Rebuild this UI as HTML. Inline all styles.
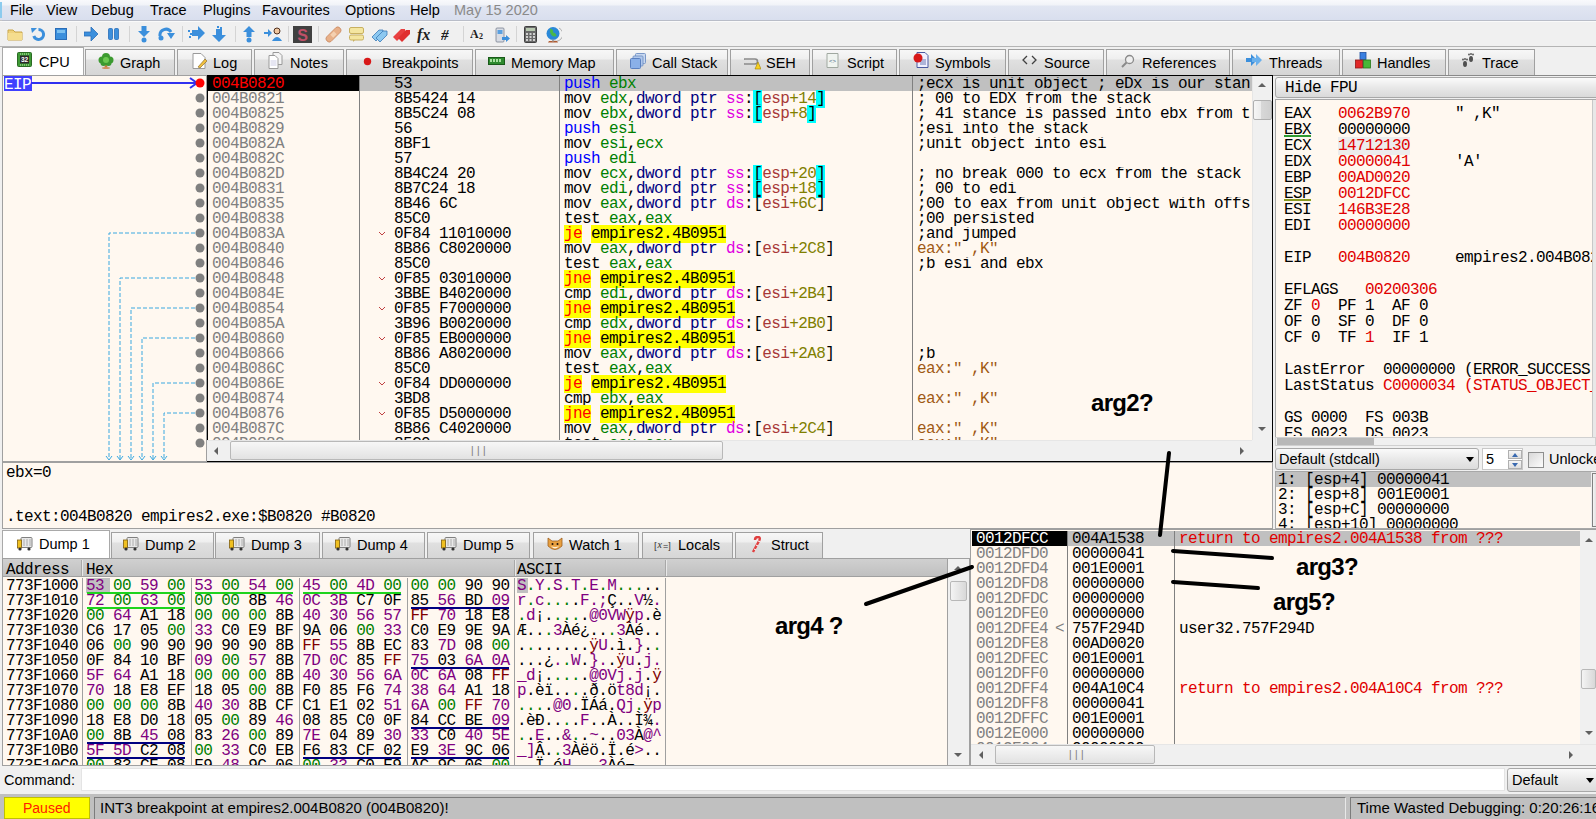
<!DOCTYPE html><html><head><meta charset="utf-8"><style>
html,body{margin:0;padding:0;}
body{width:1596px;height:819px;overflow:hidden;position:relative;background:#f0f0f0;font-family:'Liberation Sans',sans-serif;}
.m{position:absolute;font-family:'Liberation Mono',monospace;font-size:16px;letter-spacing:-0.6px;line-height:15px;white-space:pre;margin-top:1px;margin-left:-1px;}
.s{position:absolute;white-space:pre;font-family:'Liberation Sans',sans-serif;font-size:14px;line-height:16px;color:#000;}
</style></head><body><div style="position:absolute;left:0px;top:0px;width:1596px;height:21px;background:linear-gradient(#f8f9fc 0px,#f1f3f8 5px,#e1e6f2 6px,#d9dfee 20px);border-bottom:1px solid #b9bdc8;box-sizing:border-box;"></div><div class="s" style="left:10px;top:2px;font-size:14.5px;">File</div><div class="s" style="left:46px;top:2px;font-size:14.5px;">View</div><div class="s" style="left:91px;top:2px;font-size:14.5px;">Debug</div><div class="s" style="left:150px;top:2px;font-size:14.5px;">Trace</div><div class="s" style="left:203px;top:2px;font-size:14.5px;">Plugins</div><div class="s" style="left:262px;top:2px;font-size:14.5px;">Favourites</div><div class="s" style="left:345px;top:2px;font-size:14.5px;">Options</div><div class="s" style="left:410px;top:2px;font-size:14.5px;">Help</div><div class="s" style="left:454px;top:2px;font-size:14.5px;color:#8a8a8a;">May 15 2020</div><div style="position:absolute;left:0px;top:2px;width:2px;height:16px;background:#8ccbee;"></div><div style="position:absolute;left:0px;top:20px;width:2px;height:6px;background:#c4c4c4;"></div><div style="position:absolute;left:0px;top:21px;width:1596px;height:26px;background:#f0f0f0;border-top:1px solid #fafafa;border-bottom:1px solid #b4b4b4;box-sizing:border-box;"></div><div style="position:absolute;left:2px;top:47px;width:82px;height:29px;background:#fff;border:1px solid #a9a9a9;border-bottom:none;box-sizing:border-box;"></div><div class="s" style="left:39px;top:54px;font-size:14.5px;">CPU</div><div style="position:absolute;left:85px;top:49px;width:90px;height:26px;background:linear-gradient(#f7f7f7 0px,#efefef 9px,#e0e0e0 10px,#d5d5d5 26px);border:1px solid #a0a0a0;border-bottom:none;box-sizing:border-box;"></div><div class="s" style="left:120px;top:55px;font-size:14.5px;">Graph</div><div style="position:absolute;left:177px;top:49px;width:75px;height:26px;background:linear-gradient(#f7f7f7 0px,#efefef 9px,#e0e0e0 10px,#d5d5d5 26px);border:1px solid #a0a0a0;border-bottom:none;box-sizing:border-box;"></div><div class="s" style="left:213px;top:55px;font-size:14.5px;">Log</div><div style="position:absolute;left:254px;top:49px;width:90px;height:26px;background:linear-gradient(#f7f7f7 0px,#efefef 9px,#e0e0e0 10px,#d5d5d5 26px);border:1px solid #a0a0a0;border-bottom:none;box-sizing:border-box;"></div><div class="s" style="left:290px;top:55px;font-size:14.5px;">Notes</div><div style="position:absolute;left:346px;top:49px;width:127px;height:26px;background:linear-gradient(#f7f7f7 0px,#efefef 9px,#e0e0e0 10px,#d5d5d5 26px);border:1px solid #a0a0a0;border-bottom:none;box-sizing:border-box;"></div><div class="s" style="left:382px;top:55px;font-size:14.5px;">Breakpoints</div><div style="position:absolute;left:475px;top:49px;width:139px;height:26px;background:linear-gradient(#f7f7f7 0px,#efefef 9px,#e0e0e0 10px,#d5d5d5 26px);border:1px solid #a0a0a0;border-bottom:none;box-sizing:border-box;"></div><div class="s" style="left:511px;top:55px;font-size:14.5px;">Memory Map</div><div style="position:absolute;left:616px;top:49px;width:112px;height:26px;background:linear-gradient(#f7f7f7 0px,#efefef 9px,#e0e0e0 10px,#d5d5d5 26px);border:1px solid #a0a0a0;border-bottom:none;box-sizing:border-box;"></div><div class="s" style="left:652px;top:55px;font-size:14.5px;">Call Stack</div><div style="position:absolute;left:730px;top:49px;width:80px;height:26px;background:linear-gradient(#f7f7f7 0px,#efefef 9px,#e0e0e0 10px,#d5d5d5 26px);border:1px solid #a0a0a0;border-bottom:none;box-sizing:border-box;"></div><div class="s" style="left:766px;top:55px;font-size:14.5px;">SEH</div><div style="position:absolute;left:812px;top:49px;width:85px;height:26px;background:linear-gradient(#f7f7f7 0px,#efefef 9px,#e0e0e0 10px,#d5d5d5 26px);border:1px solid #a0a0a0;border-bottom:none;box-sizing:border-box;"></div><div class="s" style="left:847px;top:55px;font-size:14.5px;">Script</div><div style="position:absolute;left:899px;top:49px;width:107px;height:26px;background:linear-gradient(#f7f7f7 0px,#efefef 9px,#e0e0e0 10px,#d5d5d5 26px);border:1px solid #a0a0a0;border-bottom:none;box-sizing:border-box;"></div><div class="s" style="left:935px;top:55px;font-size:14.5px;">Symbols</div><div style="position:absolute;left:1008px;top:49px;width:96px;height:26px;background:linear-gradient(#f7f7f7 0px,#efefef 9px,#e0e0e0 10px,#d5d5d5 26px);border:1px solid #a0a0a0;border-bottom:none;box-sizing:border-box;"></div><div class="s" style="left:1044px;top:55px;font-size:14.5px;">Source</div><div style="position:absolute;left:1106px;top:49px;width:124px;height:26px;background:linear-gradient(#f7f7f7 0px,#efefef 9px,#e0e0e0 10px,#d5d5d5 26px);border:1px solid #a0a0a0;border-bottom:none;box-sizing:border-box;"></div><div class="s" style="left:1142px;top:55px;font-size:14.5px;">References</div><div style="position:absolute;left:1232px;top:49px;width:108px;height:26px;background:linear-gradient(#f7f7f7 0px,#efefef 9px,#e0e0e0 10px,#d5d5d5 26px);border:1px solid #a0a0a0;border-bottom:none;box-sizing:border-box;"></div><div class="s" style="left:1269px;top:55px;font-size:14.5px;">Threads</div><div style="position:absolute;left:1342px;top:49px;width:104px;height:26px;background:linear-gradient(#f7f7f7 0px,#efefef 9px,#e0e0e0 10px,#d5d5d5 26px);border:1px solid #a0a0a0;border-bottom:none;box-sizing:border-box;"></div><div class="s" style="left:1377px;top:55px;font-size:14.5px;">Handles</div><div style="position:absolute;left:1448px;top:49px;width:87px;height:26px;background:linear-gradient(#f7f7f7 0px,#efefef 9px,#e0e0e0 10px,#d5d5d5 26px);border:1px solid #a0a0a0;border-bottom:none;box-sizing:border-box;"></div><div class="s" style="left:1482px;top:55px;font-size:14.5px;">Trace</div><svg style="position:absolute;left:7px;top:27px" width="16" height="14" viewBox="0 0 16 14"><path d="M1 3 h5 l2 2 h7 v8 h-14 z" fill="#efd27c" stroke="#c9a548" stroke-width="1"/><path d="M1 6 h14 v7 h-14z" fill="#f5dd8e"/></svg><svg style="position:absolute;left:31px;top:27px" width="15" height="15" viewBox="0 0 15 15"><path d="M7.5 2.5 A5 5 0 1 1 2.8 9" stroke="#3b8fdc" stroke-width="3" fill="none"/><path d="M0 1 L6 1 L1 6 Z" fill="#3b8fdc"/></svg><svg style="position:absolute;left:55px;top:28px" width="12" height="12" viewBox="0 0 12 12"><rect x="0.5" y="0.5" width="11" height="11" fill="#3b8fdc" stroke="#2a6db8"/><rect x="2" y="2" width="8" height="3" fill="#7cc0f0"/></svg><div style="position:absolute;left:76px;top:26px;width:1px;height:16px;background:#d4d4d4;"></div><svg style="position:absolute;left:84px;top:27px" width="15" height="14" viewBox="0 0 15 14"><path d="M0 5 h7 v-5 l7 7 l-7 7 v-5 h-7z" fill="#3b8fdc" stroke="#2a6db8" stroke-width="0.8"/></svg><svg style="position:absolute;left:108px;top:28px" width="11" height="12" viewBox="0 0 11 12"><rect x="0.5" y="0.5" width="4" height="11" rx="1" fill="#3b8fdc" stroke="#2a6db8" stroke-width="0.8"/><rect x="6.5" y="0.5" width="4" height="11" rx="1" fill="#3b8fdc" stroke="#2a6db8" stroke-width="0.8"/></svg><div style="position:absolute;left:129px;top:26px;width:1px;height:16px;background:#d4d4d4;"></div><svg style="position:absolute;left:138px;top:26px" width="12" height="17" viewBox="0 0 12 17"><path d="M3.5 0 h5 v5 h3.5 l-6 6 l-6 -6 h3.5z" fill="#3b8fdc"/><circle cx="6" cy="14" r="2.5" fill="#3b8fdc"/></svg><svg style="position:absolute;left:158px;top:27px" width="18" height="14" viewBox="0 0 18 14"><path d="M2 9 A6 6 0 0 1 13 5" stroke="#3b8fdc" stroke-width="3" fill="none"/><path d="M9 6 h8 l-4 6z" fill="#3b8fdc"/><circle cx="3" cy="11" r="2.5" fill="#3b8fdc"/></svg><div style="position:absolute;left:182px;top:26px;width:1px;height:16px;background:#d4d4d4;"></div><svg style="position:absolute;left:188px;top:26px" width="17" height="15" viewBox="0 0 17 15"><path d="M4 4 h6 v-4 l7 7 l-7 7 v-4 h-6z" fill="#3b8fdc"/><rect x="0" y="4" width="2" height="2" fill="#3b8fdc"/><rect x="2" y="7" width="2" height="2" fill="#3b8fdc"/><rect x="1" y="10" width="2" height="2" fill="#3b8fdc"/></svg><svg style="position:absolute;left:212px;top:26px" width="15" height="17" viewBox="0 0 15 17"><path d="M4 3 h6 v6 h4 l-7 7 l-7 -7 h4z" fill="#3b8fdc"/><rect x="5" y="0" width="2" height="2" fill="#3b8fdc"/><rect x="8" y="1" width="2" height="2" fill="#3b8fdc"/></svg><div style="position:absolute;left:235px;top:26px;width:1px;height:16px;background:#d4d4d4;"></div><svg style="position:absolute;left:243px;top:26px" width="12" height="17" viewBox="0 0 12 17"><path d="M6 0 l6 6 h-3.5 v5 h-5 v-5 h-3.5z" fill="#3b8fdc"/><circle cx="6" cy="14" r="2.5" fill="#3b8fdc"/></svg><svg style="position:absolute;left:264px;top:27px" width="18" height="14" viewBox="0 0 18 14"><path d="M0 5 h4 v-3 l4 4 l-4 4 v-3 h-4z" fill="#3b8fdc"/><circle cx="13" cy="4" r="3" fill="#f0c8a0" stroke="#503020" stroke-width="1"/><path d="M8 14 q5 -8 10 0z" fill="#3b8fdc"/></svg><div style="position:absolute;left:288px;top:26px;width:1px;height:16px;background:#d4d4d4;"></div><svg style="position:absolute;left:293px;top:26px" width="19" height="17" viewBox="0 0 19 17"><rect x="0" y="0" width="19" height="17" fill="#404040"/><text x="9.5" y="14.5" font-family="Liberation Sans" font-weight="bold" font-size="16" fill="#c05068" text-anchor="middle">S</text></svg><div style="position:absolute;left:318px;top:26px;width:1px;height:16px;background:#d4d4d4;"></div><svg style="position:absolute;left:325px;top:26px" width="17" height="17" viewBox="0 0 17 17"><path d="M1.5 11 L11 1.5 Q13 0 15 2 Q17 4 15.5 6 L6 15.5 Q4 17 2 15 Q0 13 1.5 11z" fill="#e8b088" stroke="#c88860" stroke-width="0.8"/><rect x="6.5" y="6" width="4" height="5" fill="#f4d0b0" transform="rotate(45 8.5 8.5)"/></svg><svg style="position:absolute;left:349px;top:27px" width="15" height="15" viewBox="0 0 15 15"><rect x="0.5" y="0.5" width="14" height="6" rx="1.5" fill="#f4e6a0" stroke="#c8b060"/><rect x="0.5" y="8" width="14" height="5" rx="1.5" fill="#f4e6a0" stroke="#c8b060"/><path d="M4 13 v2 l2 -2z" fill="#c8b060"/></svg><svg style="position:absolute;left:371px;top:27px" width="17" height="15" viewBox="0 0 17 15"><path d="M1 10 L8 3 L12 3 L12 7 L5 14z" fill="#8cc8f0" stroke="#3a7ab8" stroke-width="0.8"/><path d="M5 11 L12 4 L16 4 L16 8 L9 15z" fill="#8cc8f0" stroke="#3a7ab8" stroke-width="0.8"/></svg><svg style="position:absolute;left:393px;top:27px" width="18" height="15" viewBox="0 0 18 15"><path d="M0 10 L8 2 L12 2 L12 6 L4 14z" fill="#e84040"/><path d="M5 11 L13 3 L17 3 L17 7 L9 15z" fill="#e03030"/></svg><svg style="position:absolute;left:416px;top:26px" width="18" height="17" viewBox="0 0 18 17"><text x="1" y="14" font-family="Liberation Serif" font-style="italic" font-weight="bold" font-size="16" fill="#202020">fx</text></svg><svg style="position:absolute;left:441px;top:26px" width="13" height="17" viewBox="0 0 13 17"><text x="0" y="14" font-family="Liberation Serif" font-style="italic" font-weight="bold" font-size="15" fill="#202020">#</text></svg><div style="position:absolute;left:463px;top:26px;width:1px;height:16px;background:#d4d4d4;"></div><svg style="position:absolute;left:470px;top:27px" width="16" height="14" viewBox="0 0 16 14"><text x="0" y="11" font-family="Liberation Serif" font-weight="bold" font-size="12" fill="#202020">A</text><text x="9" y="12" font-family="Liberation Serif" font-weight="bold" font-size="8" fill="#202020">2</text></svg><svg style="position:absolute;left:495px;top:26px" width="15" height="17" viewBox="0 0 15 17"><rect x="1" y="2" width="8" height="14" rx="1" fill="#d8dce4" stroke="#7a8090" stroke-width="0.8"/><rect x="2.5" y="4" width="5" height="4" fill="#5aa0e0"/><path d="M7 11 h4 v-2 l4 3.5 l-4 3.5 v-2 h-4z" fill="#3b8fdc"/></svg><div style="position:absolute;left:516px;top:26px;width:1px;height:16px;background:#d4d4d4;"></div><svg style="position:absolute;left:524px;top:26px" width="13" height="17" viewBox="0 0 13 17"><rect x="0.5" y="0.5" width="12" height="16" rx="1" fill="#6a6a6a" stroke="#404040"/><rect x="2" y="2" width="9" height="3" fill="#b8c8b0"/><g fill="#d0d0d0"><rect x="2" y="7" width="2" height="2"/><rect x="5.5" y="7" width="2" height="2"/><rect x="9" y="7" width="2" height="2"/><rect x="2" y="10" width="2" height="2"/><rect x="5.5" y="10" width="2" height="2"/><rect x="9" y="10" width="2" height="2"/><rect x="2" y="13" width="2" height="2"/><rect x="5.5" y="13" width="2" height="2"/><rect x="9" y="13" width="2" height="2"/></g></svg><svg style="position:absolute;left:545px;top:26px" width="17" height="17" viewBox="0 0 17 17"><path d="M14 2 A7 7 0 0 1 9 15" stroke="#b0b0b0" stroke-width="1" fill="none"/><circle cx="8" cy="7.5" r="6.5" fill="#2a88d8"/><path d="M5 2.5 q4 1 3 4 q3 0 3.5 3.5 q-3 1.5 -5 -1 q-2 -2 -1.5 -6.5z" fill="#4ab848"/><path d="M4 15 h8 l1 1.5 h-10z" fill="#b05a30"/><rect x="7" y="13.5" width="2" height="2" fill="#a0a0a0"/></svg><svg style="position:absolute;left:17px;top:52px" width="15" height="15" viewBox="0 0 15 15"><rect x="0.5" y="0.5" width="14" height="14" rx="1" fill="#3e9a36" stroke="#2a6a24"/><g fill="#c8f0b8"><rect x="3" y="1.5" width="1" height="1"/><rect x="5" y="1.5" width="1" height="1"/><rect x="7" y="1.5" width="1" height="1"/><rect x="9" y="1.5" width="1" height="1"/><rect x="11" y="1.5" width="1" height="1"/><rect x="3" y="12.5" width="1" height="1"/><rect x="5" y="12.5" width="1" height="1"/><rect x="7" y="12.5" width="1" height="1"/><rect x="9" y="12.5" width="1" height="1"/><rect x="11" y="12.5" width="1" height="1"/></g><rect x="3" y="3.5" width="9" height="8" fill="#2a2a2a"/><text x="7.5" y="10" font-family="Liberation Sans" font-weight="bold" font-size="6.5" fill="#ffffff" text-anchor="middle">32</text></svg><svg style="position:absolute;left:98px;top:53px" width="16" height="16" viewBox="0 0 16 16"><path d="M7 10 L6.5 15 L9.5 15 L9 10z" fill="#c08040"/><ellipse cx="8" cy="15" rx="4" ry="1" fill="#d09060"/><g fill="#3c9a30"><circle cx="4" cy="7" r="3.5"/><circle cx="12" cy="7" r="3.5"/><circle cx="8" cy="4" r="4"/><circle cx="5.5" cy="10" r="3"/><circle cx="10.5" cy="10" r="3"/></g><circle cx="8" cy="7" r="3" fill="#6cc850"/></svg><svg style="position:absolute;left:192px;top:53px" width="15" height="16" viewBox="0 0 15 16"><path d="M1 0.5 h8 l4 4 v11 h-12z" fill="#fff" stroke="#9a9a9a"/><path d="M6 14 L13 6 L15 8 L8 15z" fill="#f0c040" stroke="#806020" stroke-width="0.6"/></svg><svg style="position:absolute;left:268px;top:52px" width="15" height="17" viewBox="0 0 15 17"><path d="M5 0.5 h6 l3 3 v9 h-9z" fill="#f4f4f4" stroke="#9a9a9a"/><path d="M1 3.5 h6 l3 3 v10 h-9z" fill="#fff" stroke="#9a9a9a"/><g stroke="#c0c0e0" stroke-width="0.8"><line x1="2.5" y1="9" x2="8.5" y2="9"/><line x1="2.5" y1="11" x2="8.5" y2="11"/><line x1="2.5" y1="13" x2="8.5" y2="13"/></g></svg><svg style="position:absolute;left:363px;top:57px" width="9" height="9" viewBox="0 0 9 9"><circle cx="4.5" cy="4.5" r="3.7" fill="#d81818"/></svg><svg style="position:absolute;left:488px;top:57px" width="17" height="8" viewBox="0 0 17 8"><rect x="0.5" y="0.5" width="16" height="7" fill="#2e8a2e" stroke="#1a5a1a"/><g fill="#a8e0a0"><rect x="2" y="2" width="2" height="3"/><rect x="5" y="2" width="2" height="3"/><rect x="8" y="2" width="2" height="3"/><rect x="11" y="2" width="2" height="3"/></g></svg><svg style="position:absolute;left:630px;top:53px" width="16" height="16" viewBox="0 0 16 16"><rect x="5.5" y="0.5" width="10" height="10" rx="1" fill="#c8d8f0" stroke="#7a98c8"/><rect x="3" y="3" width="10" height="10" rx="1" fill="#b0c8ec" stroke="#7a98c8"/><rect x="0.5" y="5.5" width="10" height="10" rx="1" fill="#8ab0e8" stroke="#5a80c0"/></svg><svg style="position:absolute;left:744px;top:56px" width="17" height="14" viewBox="0 0 17 14"><path d="M1 3 h10 a2.5 2.5 0 0 1 0 5 h-10 a2.5 2.5 0 0 1 0 -5z" fill="none" stroke="#8a8a8a" stroke-width="1.6"/><path d="M11 13 L14 6 L17 13z" fill="#f8d020" stroke="#a08000" stroke-width="0.6"/></svg><svg style="position:absolute;left:825px;top:53px" width="15" height="16" viewBox="0 0 15 16"><path d="M2 0.5 h11 v14 h-11z" fill="#f0f4f0" stroke="#a0a8a0"/><text x="7.5" y="10" font-family="Liberation Sans" font-size="6" fill="#406080" text-anchor="middle">&lt;&gt;</text></svg><svg style="position:absolute;left:913px;top:52px" width="17" height="16" viewBox="0 0 17 16"><path d="M4 0.5 h8 l3 3 v12 h-11z" fill="#f0f0ff" stroke="#4a5aa0"/><g stroke="#4a5aa0" stroke-width="0.8"><line x1="7" y1="8" x2="13" y2="8"/><line x1="7" y1="10" x2="13" y2="10"/><line x1="7" y1="12" x2="13" y2="12"/></g><circle cx="5" cy="6" r="4.5" fill="#d81818"/></svg><svg style="position:absolute;left:1022px;top:55px" width="15" height="10" viewBox="0 0 15 10"><path d="M5 1 L1 5 L5 9 M10 1 L14 5 L10 9" stroke="#404040" stroke-width="1.3" fill="none"/></svg><svg style="position:absolute;left:1121px;top:54px" width="14" height="14" viewBox="0 0 14 14"><circle cx="8.5" cy="5.5" r="4" fill="#f0f0f0" stroke="#8a8a8a" stroke-width="1.3"/><line x1="5.5" y1="8.5" x2="1" y2="13" stroke="#8a8a8a" stroke-width="2"/></svg><svg style="position:absolute;left:1246px;top:54px" width="17" height="13" viewBox="0 0 17 13"><path d="M0 4 h5 v-4 l6 6 l-6 6 v-4 h-5z" fill="#3b8fdc"/><path d="M6 4 h4 v-4 l6 6 l-6 6 v-4 h-4z" fill="#6ab0ec"/></svg><svg style="position:absolute;left:1355px;top:52px" width="16" height="17" viewBox="0 0 16 17"><rect x="5" y="0.5" width="6" height="7" fill="#3a80e0" stroke="#2050a0" stroke-width="0.8"/><rect x="0.5" y="8" width="7" height="8" fill="#e02828" stroke="#901818" stroke-width="0.8"/><rect x="8.5" y="8" width="7" height="8" fill="#48b838" stroke="#287818" stroke-width="0.8"/></svg><svg style="position:absolute;left:1461px;top:53px" width="14" height="16" viewBox="0 0 14 16"><g fill="#505050"><ellipse cx="4" cy="11" rx="2" ry="3"/><circle cx="2" cy="6.5" r="0.9"/><circle cx="4" cy="6" r="0.9"/><circle cx="6" cy="6.5" r="0.9"/><ellipse cx="10" cy="6" rx="2" ry="3"/><circle cx="8" cy="1.5" r="0.9"/><circle cx="10" cy="1" r="0.9"/><circle cx="12" cy="1.5" r="0.9"/></g></svg><div style="position:absolute;left:2px;top:75px;width:205px;height:387px;background:#FFF8F0;border:1px solid #a0a0a0;box-sizing:border-box;"></div><div style="position:absolute;left:207px;top:75px;width:1066px;height:387px;background:#FFF8F0;border:1px solid #000;box-sizing:border-box;"></div><div style="position:absolute;left:208px;top:76px;width:1044px;height:364px;overflow:hidden;"><div style="position:absolute;left:0px;top:0px;width:151px;height:15px;background:#000;"></div><div style="position:absolute;left:151px;top:0px;width:893px;height:15px;background:#C0C0C0;"></div><div class="m" style="left:5px;top:0px;color:#FF0000;">004B0820</div><div class="m" style="left:187px;top:0px;color:#000;">53</div><div class="m" style="left:357px;top:0px;color:#000;"><span style="color:#0000FF;">push</span> <span style="color:#008000;">ebx</span></div><div class="m" style="left:710px;top:0px;width:333px;overflow:hidden;color:#000000;">;ecx is unit object ; eDx is our stance</div><div class="m" style="left:5px;top:15px;color:#808080;">004B0821</div><div class="m" style="left:187px;top:15px;color:#000;">8B5424 14</div><div class="m" style="left:357px;top:15px;color:#000;"><span style="color:#000000;">mov</span> <span style="color:#008000;">edx</span><span style="color:#000000;">,</span><span style="color:#000080;">dword ptr</span> <span style="color:#E000E0;">ss</span><span style="color:#000000;">:</span><span style="color:#000000;background:#00FFFF;">[</span><span style="color:#A83838;">esp</span><span style="color:#808000;">+14</span><span style="color:#000000;background:#00FFFF;">]</span></div><div class="m" style="left:710px;top:15px;width:333px;overflow:hidden;color:#000000;">; 00 to EDX from the stack</div><div class="m" style="left:5px;top:30px;color:#808080;">004B0825</div><div class="m" style="left:187px;top:30px;color:#000;">8B5C24 08</div><div class="m" style="left:357px;top:30px;color:#000;"><span style="color:#000000;">mov</span> <span style="color:#008000;">ebx</span><span style="color:#000000;">,</span><span style="color:#000080;">dword ptr</span> <span style="color:#E000E0;">ss</span><span style="color:#000000;">:</span><span style="color:#000000;background:#00FFFF;">[</span><span style="color:#A83838;">esp</span><span style="color:#808000;">+8</span><span style="color:#000000;background:#00FFFF;">]</span></div><div class="m" style="left:710px;top:30px;width:333px;overflow:hidden;color:#000000;">; 41 stance is passed into ebx from the stack</div><div class="m" style="left:5px;top:45px;color:#808080;">004B0829</div><div class="m" style="left:187px;top:45px;color:#000;">56</div><div class="m" style="left:357px;top:45px;color:#000;"><span style="color:#0000FF;">push</span> <span style="color:#008000;">esi</span></div><div class="m" style="left:710px;top:45px;width:333px;overflow:hidden;color:#000000;">;esi into the stack</div><div class="m" style="left:5px;top:60px;color:#808080;">004B082A</div><div class="m" style="left:187px;top:60px;color:#000;">8BF1</div><div class="m" style="left:357px;top:60px;color:#000;"><span style="color:#000000;">mov</span> <span style="color:#008000;">esi</span><span style="color:#000000;">,</span><span style="color:#008000;">ecx</span></div><div class="m" style="left:710px;top:60px;width:333px;overflow:hidden;color:#000000;">;unit object into esi</div><div class="m" style="left:5px;top:75px;color:#808080;">004B082C</div><div class="m" style="left:187px;top:75px;color:#000;">57</div><div class="m" style="left:357px;top:75px;color:#000;"><span style="color:#0000FF;">push</span> <span style="color:#008000;">edi</span></div><div class="m" style="left:710px;top:75px;width:333px;overflow:hidden;color:#000000;"></div><div class="m" style="left:5px;top:90px;color:#808080;">004B082D</div><div class="m" style="left:187px;top:90px;color:#000;">8B4C24 20</div><div class="m" style="left:357px;top:90px;color:#000;"><span style="color:#000000;">mov</span> <span style="color:#008000;">ecx</span><span style="color:#000000;">,</span><span style="color:#000080;">dword ptr</span> <span style="color:#E000E0;">ss</span><span style="color:#000000;">:</span><span style="color:#000000;background:#00FFFF;">[</span><span style="color:#A83838;">esp</span><span style="color:#808000;">+20</span><span style="color:#000000;background:#00FFFF;">]</span></div><div class="m" style="left:710px;top:90px;width:333px;overflow:hidden;color:#000000;">; no break 000 to ecx from the stack</div><div class="m" style="left:5px;top:105px;color:#808080;">004B0831</div><div class="m" style="left:187px;top:105px;color:#000;">8B7C24 18</div><div class="m" style="left:357px;top:105px;color:#000;"><span style="color:#000000;">mov</span> <span style="color:#008000;">edi</span><span style="color:#000000;">,</span><span style="color:#000080;">dword ptr</span> <span style="color:#E000E0;">ss</span><span style="color:#000000;">:</span><span style="color:#000000;background:#00FFFF;">[</span><span style="color:#A83838;">esp</span><span style="color:#808000;">+18</span><span style="color:#000000;background:#00FFFF;">]</span></div><div class="m" style="left:710px;top:105px;width:333px;overflow:hidden;color:#000000;">; 00 to edi</div><div class="m" style="left:5px;top:120px;color:#808080;">004B0835</div><div class="m" style="left:187px;top:120px;color:#000;">8B46 6C</div><div class="m" style="left:357px;top:120px;color:#000;"><span style="color:#000000;">mov</span> <span style="color:#008000;">eax</span><span style="color:#000000;">,</span><span style="color:#000080;">dword ptr</span> <span style="color:#E000E0;">ds</span><span style="color:#000000;">:</span><span style="color:#000000;">[</span><span style="color:#A83838;">esi</span><span style="color:#808000;">+6C</span><span style="color:#000000;">]</span></div><div class="m" style="left:710px;top:120px;width:333px;overflow:hidden;color:#000000;">;00 to eax from unit object with offset</div><div class="m" style="left:5px;top:135px;color:#808080;">004B0838</div><div class="m" style="left:187px;top:135px;color:#000;">85C0</div><div class="m" style="left:357px;top:135px;color:#000;"><span style="color:#000000;">test</span> <span style="color:#008000;">eax</span><span style="color:#000000;">,</span><span style="color:#008000;">eax</span></div><div class="m" style="left:710px;top:135px;width:333px;overflow:hidden;color:#000000;">;00 persisted</div><div class="m" style="left:5px;top:150px;color:#808080;">004B083A</div><div class="m" style="left:187px;top:150px;color:#000;">0F84 11010000</div><svg style="position:absolute;left:170px;top:155px" width="8" height="6"><path d="M1 1 L4 4 L7 1" stroke="#c04040" stroke-width="1" fill="none"/></svg><div class="m" style="left:357px;top:150px;color:#000;"><span style="color:#FF0000;background:#FFFF00;">je</span> <span style="color:#000000;background:#FFFF00;">empires2.4B0951</span></div><div class="m" style="left:710px;top:150px;width:333px;overflow:hidden;color:#000000;">;and jumped</div><div class="m" style="left:5px;top:165px;color:#808080;">004B0840</div><div class="m" style="left:187px;top:165px;color:#000;">8B86 C8020000</div><div class="m" style="left:357px;top:165px;color:#000;"><span style="color:#000000;">mov</span> <span style="color:#008000;">eax</span><span style="color:#000000;">,</span><span style="color:#000080;">dword ptr</span> <span style="color:#E000E0;">ds</span><span style="color:#000000;">:</span><span style="color:#000000;">[</span><span style="color:#A83838;">esi</span><span style="color:#808000;">+2C8</span><span style="color:#000000;">]</span></div><div class="m" style="left:710px;top:165px;width:333px;overflow:hidden;color:#A05A14;">eax:" ,K"</div><div class="m" style="left:5px;top:180px;color:#808080;">004B0846</div><div class="m" style="left:187px;top:180px;color:#000;">85C0</div><div class="m" style="left:357px;top:180px;color:#000;"><span style="color:#000000;">test</span> <span style="color:#008000;">eax</span><span style="color:#000000;">,</span><span style="color:#008000;">eax</span></div><div class="m" style="left:710px;top:180px;width:333px;overflow:hidden;color:#000000;">;b esi and ebx</div><div class="m" style="left:5px;top:195px;color:#808080;">004B0848</div><div class="m" style="left:187px;top:195px;color:#000;">0F85 03010000</div><svg style="position:absolute;left:170px;top:200px" width="8" height="6"><path d="M1 1 L4 4 L7 1" stroke="#c04040" stroke-width="1" fill="none"/></svg><div class="m" style="left:357px;top:195px;color:#000;"><span style="color:#FF0000;background:#FFFF00;">jne</span> <span style="color:#000000;background:#FFFF00;">empires2.4B0951</span></div><div class="m" style="left:710px;top:195px;width:333px;overflow:hidden;color:#000000;"></div><div class="m" style="left:5px;top:210px;color:#808080;">004B084E</div><div class="m" style="left:187px;top:210px;color:#000;">3BBE B4020000</div><div class="m" style="left:357px;top:210px;color:#000;"><span style="color:#000000;">cmp</span> <span style="color:#008000;">edi</span><span style="color:#000000;">,</span><span style="color:#000080;">dword ptr</span> <span style="color:#E000E0;">ds</span><span style="color:#000000;">:</span><span style="color:#000000;">[</span><span style="color:#A83838;">esi</span><span style="color:#808000;">+2B4</span><span style="color:#000000;">]</span></div><div class="m" style="left:710px;top:210px;width:333px;overflow:hidden;color:#000000;"></div><div class="m" style="left:5px;top:225px;color:#808080;">004B0854</div><div class="m" style="left:187px;top:225px;color:#000;">0F85 F7000000</div><svg style="position:absolute;left:170px;top:230px" width="8" height="6"><path d="M1 1 L4 4 L7 1" stroke="#c04040" stroke-width="1" fill="none"/></svg><div class="m" style="left:357px;top:225px;color:#000;"><span style="color:#FF0000;background:#FFFF00;">jne</span> <span style="color:#000000;background:#FFFF00;">empires2.4B0951</span></div><div class="m" style="left:710px;top:225px;width:333px;overflow:hidden;color:#000000;"></div><div class="m" style="left:5px;top:240px;color:#808080;">004B085A</div><div class="m" style="left:187px;top:240px;color:#000;">3B96 B0020000</div><div class="m" style="left:357px;top:240px;color:#000;"><span style="color:#000000;">cmp</span> <span style="color:#008000;">edx</span><span style="color:#000000;">,</span><span style="color:#000080;">dword ptr</span> <span style="color:#E000E0;">ds</span><span style="color:#000000;">:</span><span style="color:#000000;">[</span><span style="color:#A83838;">esi</span><span style="color:#808000;">+2B0</span><span style="color:#000000;">]</span></div><div class="m" style="left:710px;top:240px;width:333px;overflow:hidden;color:#000000;"></div><div class="m" style="left:5px;top:255px;color:#808080;">004B0860</div><div class="m" style="left:187px;top:255px;color:#000;">0F85 EB000000</div><svg style="position:absolute;left:170px;top:260px" width="8" height="6"><path d="M1 1 L4 4 L7 1" stroke="#c04040" stroke-width="1" fill="none"/></svg><div class="m" style="left:357px;top:255px;color:#000;"><span style="color:#FF0000;background:#FFFF00;">jne</span> <span style="color:#000000;background:#FFFF00;">empires2.4B0951</span></div><div class="m" style="left:710px;top:255px;width:333px;overflow:hidden;color:#000000;"></div><div class="m" style="left:5px;top:270px;color:#808080;">004B0866</div><div class="m" style="left:187px;top:270px;color:#000;">8B86 A8020000</div><div class="m" style="left:357px;top:270px;color:#000;"><span style="color:#000000;">mov</span> <span style="color:#008000;">eax</span><span style="color:#000000;">,</span><span style="color:#000080;">dword ptr</span> <span style="color:#E000E0;">ds</span><span style="color:#000000;">:</span><span style="color:#000000;">[</span><span style="color:#A83838;">esi</span><span style="color:#808000;">+2A8</span><span style="color:#000000;">]</span></div><div class="m" style="left:710px;top:270px;width:333px;overflow:hidden;color:#000000;">;b</div><div class="m" style="left:5px;top:285px;color:#808080;">004B086C</div><div class="m" style="left:187px;top:285px;color:#000;">85C0</div><div class="m" style="left:357px;top:285px;color:#000;"><span style="color:#000000;">test</span> <span style="color:#008000;">eax</span><span style="color:#000000;">,</span><span style="color:#008000;">eax</span></div><div class="m" style="left:710px;top:285px;width:333px;overflow:hidden;color:#A05A14;">eax:" ,K"</div><div class="m" style="left:5px;top:300px;color:#808080;">004B086E</div><div class="m" style="left:187px;top:300px;color:#000;">0F84 DD000000</div><svg style="position:absolute;left:170px;top:305px" width="8" height="6"><path d="M1 1 L4 4 L7 1" stroke="#c04040" stroke-width="1" fill="none"/></svg><div class="m" style="left:357px;top:300px;color:#000;"><span style="color:#FF0000;background:#FFFF00;">je</span> <span style="color:#000000;background:#FFFF00;">empires2.4B0951</span></div><div class="m" style="left:710px;top:300px;width:333px;overflow:hidden;color:#000000;"></div><div class="m" style="left:5px;top:315px;color:#808080;">004B0874</div><div class="m" style="left:187px;top:315px;color:#000;">3BD8</div><div class="m" style="left:357px;top:315px;color:#000;"><span style="color:#000000;">cmp</span> <span style="color:#008000;">ebx</span><span style="color:#000000;">,</span><span style="color:#008000;">eax</span></div><div class="m" style="left:710px;top:315px;width:333px;overflow:hidden;color:#A05A14;">eax:" ,K"</div><div class="m" style="left:5px;top:330px;color:#808080;">004B0876</div><div class="m" style="left:187px;top:330px;color:#000;">0F85 D5000000</div><svg style="position:absolute;left:170px;top:335px" width="8" height="6"><path d="M1 1 L4 4 L7 1" stroke="#c04040" stroke-width="1" fill="none"/></svg><div class="m" style="left:357px;top:330px;color:#000;"><span style="color:#FF0000;background:#FFFF00;">jne</span> <span style="color:#000000;background:#FFFF00;">empires2.4B0951</span></div><div class="m" style="left:710px;top:330px;width:333px;overflow:hidden;color:#000000;"></div><div class="m" style="left:5px;top:345px;color:#808080;">004B087C</div><div class="m" style="left:187px;top:345px;color:#000;">8B86 C4020000</div><div class="m" style="left:357px;top:345px;color:#000;"><span style="color:#000000;">mov</span> <span style="color:#008000;">eax</span><span style="color:#000000;">,</span><span style="color:#000080;">dword ptr</span> <span style="color:#E000E0;">ds</span><span style="color:#000000;">:</span><span style="color:#000000;">[</span><span style="color:#A83838;">esi</span><span style="color:#808000;">+2C4</span><span style="color:#000000;">]</span></div><div class="m" style="left:710px;top:345px;width:333px;overflow:hidden;color:#A05A14;">eax:" ,K"</div><div class="m" style="left:5px;top:360px;color:#808080;">004B0882</div><div class="m" style="left:187px;top:360px;color:#000;">85C0</div><div class="m" style="left:357px;top:360px;color:#000;"><span style="color:#000000;">test</span> <span style="color:#008000;">eax</span><span style="color:#000000;">,</span><span style="color:#008000;">eax</span></div><div class="m" style="left:710px;top:360px;width:333px;overflow:hidden;color:#A05A14;">eax:" ,K"</div><div style="position:absolute;left:151px;top:0px;width:1px;height:364px;background:#808080;"></div><div style="position:absolute;left:351px;top:0px;width:1px;height:364px;background:#808080;"></div><div style="position:absolute;left:704px;top:0px;width:1px;height:364px;background:#808080;"></div></div><div style="position:absolute;left:1252px;top:76px;width:20px;height:364px;background:#f0f0f0;border-left:1px solid #e6e6e6;box-sizing:border-box;"></div><svg style="position:absolute;left:1256px;top:80px" width="12" height="10"><path d="M2 7 L6 3 L10 7 Z" fill="#606060"/></svg><div style="position:absolute;left:1253px;top:100px;width:19px;height:20px;background:linear-gradient(90deg,#f6f6f6 0%,#ececec 40%,#d8d8d8 41%,#cfcfcf 100%);border:1px solid #b0b0b0;border-radius:2px;box-sizing:border-box;"></div><svg style="position:absolute;left:1256px;top:424px" width="12" height="10"><path d="M2 3 L6 7 L10 3 Z" fill="#606060"/></svg><div style="position:absolute;left:207px;top:440px;width:1045px;height:21px;background:#f0f0f0;border-top:1px solid #e6e6e6;box-sizing:border-box;"></div><div style="position:absolute;left:1252px;top:440px;width:20px;height:21px;background:#f0f0f0;"></div><svg style="position:absolute;left:210px;top:444px" width="12" height="14"><path d="M8 3 L4 7 L8 11 Z" fill="#606060"/></svg><div style="position:absolute;left:230px;top:441px;width:493px;height:19px;background:linear-gradient(#f7f7f7,#e2e2e2);border:1px solid #b8b8b8;border-radius:2px;box-sizing:border-box;"></div><div class="m" style="left:470px;top:443px;color:#808080;font-size:11px;">|||</div><svg style="position:absolute;left:1236px;top:444px" width="12" height="14"><path d="M4 3 L8 7 L4 11 Z" fill="#606060"/></svg><div style="position:absolute;left:4px;top:76px;width:28px;height:15px;background:#4040ff;"></div><div class="m" style="left:5px;top:77px;color:#fff;">EIP</div><svg style="position:absolute;left:0;top:76px" width="206" height="385"><line x1="31" y1="7" x2="196" y2="7" stroke="#3030f0" stroke-width="2"/><path d="M190 2 L197 7 L190 12" stroke="#3030f0" stroke-width="2" fill="none"/><circle cx="200" cy="7" r="4.5" fill="#ff0000"/><circle cx="200" cy="22" r="4.5" fill="#808080"/><circle cx="200" cy="37" r="4.5" fill="#808080"/><circle cx="200" cy="52" r="4.5" fill="#808080"/><circle cx="200" cy="67" r="4.5" fill="#808080"/><circle cx="200" cy="82" r="4.5" fill="#808080"/><circle cx="200" cy="97" r="4.5" fill="#808080"/><circle cx="200" cy="112" r="4.5" fill="#808080"/><circle cx="200" cy="127" r="4.5" fill="#808080"/><circle cx="200" cy="142" r="4.5" fill="#808080"/><circle cx="200" cy="157" r="4.5" fill="#808080"/><circle cx="200" cy="172" r="4.5" fill="#808080"/><circle cx="200" cy="187" r="4.5" fill="#808080"/><circle cx="200" cy="202" r="4.5" fill="#808080"/><circle cx="200" cy="217" r="4.5" fill="#808080"/><circle cx="200" cy="232" r="4.5" fill="#808080"/><circle cx="200" cy="247" r="4.5" fill="#808080"/><circle cx="200" cy="262" r="4.5" fill="#808080"/><circle cx="200" cy="277" r="4.5" fill="#808080"/><circle cx="200" cy="292" r="4.5" fill="#808080"/><circle cx="200" cy="307" r="4.5" fill="#808080"/><circle cx="200" cy="322" r="4.5" fill="#808080"/><circle cx="200" cy="337" r="4.5" fill="#808080"/><circle cx="200" cy="352" r="4.5" fill="#808080"/><circle cx="200" cy="367" r="4.5" fill="#808080"/><path d="M195 157 H109 V383" stroke="#3aa8e0" stroke-width="1" stroke-dasharray="4,2" fill="none"/><path d="M106 380 L109 384 L112 380" stroke="#3aa8e0" stroke-width="1" fill="none"/><path d="M195 202 H120 V383" stroke="#3aa8e0" stroke-width="1" stroke-dasharray="4,2" fill="none"/><path d="M117 380 L120 384 L123 380" stroke="#3aa8e0" stroke-width="1" fill="none"/><path d="M195 232 H131 V383" stroke="#3aa8e0" stroke-width="1" stroke-dasharray="4,2" fill="none"/><path d="M128 380 L131 384 L134 380" stroke="#3aa8e0" stroke-width="1" fill="none"/><path d="M195 262 H142 V383" stroke="#3aa8e0" stroke-width="1" stroke-dasharray="4,2" fill="none"/><path d="M139 380 L142 384 L145 380" stroke="#3aa8e0" stroke-width="1" fill="none"/><path d="M195 307 H153 V383" stroke="#3aa8e0" stroke-width="1" stroke-dasharray="4,2" fill="none"/><path d="M150 380 L153 384 L156 380" stroke="#3aa8e0" stroke-width="1" fill="none"/><path d="M195 337 H164 V383" stroke="#3aa8e0" stroke-width="1" stroke-dasharray="4,2" fill="none"/><path d="M161 380 L164 384 L167 380" stroke="#3aa8e0" stroke-width="1" fill="none"/></svg><div style="position:absolute;left:2px;top:462px;width:1271px;height:67px;background:#FFF8F0;border:1px solid #a0a0a0;box-sizing:border-box;"></div><div class="m" style="left:7px;top:465px;color:#000;">ebx=0</div><div class="m" style="left:7px;top:509px;color:#000;">.text:004B0820 empires2.exe:$B0820 #B0820</div><div style="position:absolute;left:1273px;top:75px;width:323px;height:1px;background:#8a8a8a;"></div><div style="position:absolute;left:1274px;top:76px;width:322px;height:371px;background:#f0f0f0;"></div><div style="position:absolute;left:1275px;top:77px;width:330px;height:21px;background:linear-gradient(#fbfbfb,#e8e8e8 50%,#dadada);border:1px solid #a8a8a8;border-radius:3px;box-sizing:border-box;"></div><div class="m" style="left:1286px;top:80px;color:#000;">Hide FPU</div><div style="position:absolute;left:1275px;top:99px;width:330px;height:339px;background:#FFF8F0;border:1px solid #a8a8a8;box-sizing:border-box;"></div><div style="position:absolute;left:1276px;top:100px;width:316px;height:336px;overflow:hidden;"><div class="m" style="left:9px;top:6px;"><span style="color:#000;">EAX</span>   <span style="color:#E00000;">0062B970</span>     <span style="color:#000;">" ,K"</span></div><div class="m" style="left:9px;top:22px;"><span style="color:#000;">EBX</span>   <span style="color:#000;">00000000</span>     <span style="color:#000;"></span></div><div class="m" style="left:9px;top:38px;"><span style="color:#000;">ECX</span>   <span style="color:#E00000;background:#ececec;">14712130</span>     <span style="color:#000;"></span></div><div class="m" style="left:9px;top:54px;"><span style="color:#000;">EDX</span>   <span style="color:#E00000;">00000041</span>     <span style="color:#000;">'A'</span></div><div class="m" style="left:9px;top:70px;"><span style="color:#000;">EBP</span>   <span style="color:#E00000;">00AD0020</span>     <span style="color:#000;"></span></div><div class="m" style="left:9px;top:86px;"><span style="color:#000;">ESP</span>   <span style="color:#E00000;">0012DFCC</span>     <span style="color:#000;"></span></div><div class="m" style="left:9px;top:102px;"><span style="color:#000;">ESI</span>   <span style="color:#E00000;">146B3E28</span>     <span style="color:#000;"></span></div><div class="m" style="left:9px;top:118px;"><span style="color:#000;">EDI</span>   <span style="color:#E00000;">00000000</span>     <span style="color:#000;"></span></div><div style="position:absolute;left:8px;top:35px;width:27px;height:2px;background:#2e9a2e;"></div><div style="position:absolute;left:8px;top:99px;width:27px;height:2px;background:#8a9a20;"></div><div class="m" style="left:9px;top:150px;"><span style="color:#000;">EIP</span>   <span style="color:#E00000;">004B0820</span>     <span style="color:#000;">empires2.004B0820</span></div><div class="m" style="left:9px;top:182px;"><span style="color:#000;">EFLAGS</span>   <span style="color:#E00000;">00200306</span></div><div class="m" style="left:9px;top:198px;"><span style="color:#000;">ZF </span><span style="color:#E00000;">0</span><span style="color:#000;">  PF 1  AF 0</span></div><div class="m" style="left:9px;top:214px;"><span style="color:#000;">OF 0  SF 0  DF 0</span></div><div class="m" style="left:9px;top:230px;"><span style="color:#000;">CF 0  TF </span><span style="color:#E00000;">1</span><span style="color:#000;">  IF 1</span></div><div class="m" style="left:9px;top:262px;"><span style="color:#000;">LastError  00000000 (ERROR_SUCCESS)</span></div><div class="m" style="left:9px;top:278px;"><span style="color:#000;">LastStatus </span><span style="color:#E00000;">C0000034 (STATUS_OBJECT_NAME_NOT_FOUND)</span></div><div class="m" style="left:9px;top:310px;"><span style="color:#000;">GS 0000  FS 003B</span></div><div class="m" style="left:9px;top:326px;"><span style="color:#000;">ES 0023  DS 0023</span></div></div><div style="position:absolute;left:1275px;top:437px;width:321px;height:9px;background:#f0f0f0;border:1px solid #d0d0d0;box-sizing:border-box;"></div><div style="position:absolute;left:1277px;top:438px;width:97px;height:7px;background:#b8b8b8;"></div><div style="position:absolute;left:1592px;top:100px;width:4px;height:337px;background:#e8e8e8;border-left:1px solid #c8c8c8;box-sizing:border-box;"></div><div style="position:absolute;left:1275px;top:448px;width:204px;height:22px;background:linear-gradient(#fafafa,#e9e9e9 50%,#dcdcdc);border:1px solid #a8a8a8;border-radius:3px;box-sizing:border-box;"></div><div class="s" style="left:1279px;top:451px;font-size:14.5px;">Default (stdcall)</div><svg style="position:absolute;left:1465px;top:455px" width="10" height="8"><path d="M1 2 L9 2 L5 7 Z" fill="#000"/></svg><div style="position:absolute;left:1482px;top:448px;width:41px;height:22px;background:#fff;border:1px solid #c8c8c8;box-sizing:border-box;"></div><div class="s" style="left:1486px;top:451px;font-size:14.5px;">5</div><div style="position:absolute;left:1508px;top:450px;width:14px;height:9px;background:linear-gradient(#f6f6f6,#dedede);border:1px solid #b0b0b0;box-sizing:border-box;"></div><div style="position:absolute;left:1508px;top:460px;width:14px;height:9px;background:linear-gradient(#f6f6f6,#dedede);border:1px solid #b0b0b0;box-sizing:border-box;"></div><svg style="position:absolute;left:1508px;top:450px" width="14" height="20"><path d="M4 7 L7 3 L10 7 Z" fill="#3a6ab0"/><path d="M4 13 L7 17 L10 13 Z" fill="#3a6ab0"/></svg><div style="position:absolute;left:1528px;top:452px;width:16px;height:16px;background:linear-gradient(135deg,#d8d8d8,#fdfdfd);border:1px solid #8e8f8f;box-sizing:border-box;"></div><div class="s" style="left:1549px;top:451px;font-size:14.5px;">Unlocked</div><div style="position:absolute;left:1275px;top:471px;width:321px;height:58px;background:#FFF8F0;border:1px solid #a8a8a8;box-sizing:border-box;"></div><div style="position:absolute;left:1276px;top:472px;width:315px;height:56px;overflow:hidden;"><div style="position:absolute;left:0px;top:0px;width:315px;height:15px;background:#C0C0C0;"></div><div class="m" style="left:3px;top:0px;color:#000;">1: [esp+4] 00000041</div><div class="m" style="left:3px;top:15px;color:#000;">2: [esp+8] 001E0001</div><div class="m" style="left:3px;top:30px;color:#000;">3: [esp+C] 00000000</div><div class="m" style="left:3px;top:45px;color:#000;">4: [esp+10] 00000000</div></div><div style="position:absolute;left:1591px;top:472px;width:5px;height:56px;background:#f0f0f0;"></div><div style="position:absolute;left:1592px;top:473px;width:6px;height:54px;background:linear-gradient(90deg,#f4f4f4,#dcdcdc);border:1px solid #808080;box-sizing:border-box;"></div><div style="position:absolute;left:2px;top:530px;width:108px;height:29px;background:#fff;border:1px solid #a9a9a9;border-bottom:none;box-sizing:border-box;"></div><div class="s" style="left:39px;top:536px;font-size:14.5px;">Dump 1</div><div style="position:absolute;left:111px;top:532px;width:103px;height:27px;background:linear-gradient(#f7f7f7 0px,#efefef 9px,#e0e0e0 10px,#d5d5d5 27px);border:1px solid #a0a0a0;border-bottom:none;box-sizing:border-box;"></div><div class="s" style="left:145px;top:537px;font-size:14.5px;">Dump 2</div><div style="position:absolute;left:215px;top:532px;width:105px;height:27px;background:linear-gradient(#f7f7f7 0px,#efefef 9px,#e0e0e0 10px,#d5d5d5 27px);border:1px solid #a0a0a0;border-bottom:none;box-sizing:border-box;"></div><div class="s" style="left:251px;top:537px;font-size:14.5px;">Dump 3</div><div style="position:absolute;left:322px;top:532px;width:103px;height:27px;background:linear-gradient(#f7f7f7 0px,#efefef 9px,#e0e0e0 10px,#d5d5d5 27px);border:1px solid #a0a0a0;border-bottom:none;box-sizing:border-box;"></div><div class="s" style="left:357px;top:537px;font-size:14.5px;">Dump 4</div><div style="position:absolute;left:427px;top:532px;width:103px;height:27px;background:linear-gradient(#f7f7f7 0px,#efefef 9px,#e0e0e0 10px,#d5d5d5 27px);border:1px solid #a0a0a0;border-bottom:none;box-sizing:border-box;"></div><div class="s" style="left:463px;top:537px;font-size:14.5px;">Dump 5</div><div style="position:absolute;left:533px;top:532px;width:106px;height:27px;background:linear-gradient(#f7f7f7 0px,#efefef 9px,#e0e0e0 10px,#d5d5d5 27px);border:1px solid #a0a0a0;border-bottom:none;box-sizing:border-box;"></div><div class="s" style="left:569px;top:537px;font-size:14.5px;">Watch 1</div><div style="position:absolute;left:642px;top:532px;width:91px;height:27px;background:linear-gradient(#f7f7f7 0px,#efefef 9px,#e0e0e0 10px,#d5d5d5 27px);border:1px solid #a0a0a0;border-bottom:none;box-sizing:border-box;"></div><div class="s" style="left:678px;top:537px;font-size:14.5px;">Locals</div><div style="position:absolute;left:735px;top:532px;width:88px;height:27px;background:linear-gradient(#f7f7f7 0px,#efefef 9px,#e0e0e0 10px,#d5d5d5 27px);border:1px solid #a0a0a0;border-bottom:none;box-sizing:border-box;"></div><div class="s" style="left:771px;top:537px;font-size:14.5px;">Struct</div><svg style="position:absolute;left:17px;top:537px" width="16" height="14" viewBox="0 0 16 14"><rect x="4" y="0.5" width="11" height="10" rx="1" fill="#e8e8e8" stroke="#808080"/><g stroke="#a0a0a0" stroke-width="0.8"><line x1="7" y1="2" x2="7" y2="9"/><line x1="10" y1="2" x2="10" y2="9"/><line x1="13" y1="2" x2="13" y2="9"/></g><rect x="0.5" y="3" width="4" height="8" fill="#f0c020" stroke="#806010" stroke-width="0.8"/><circle cx="3" cy="12" r="1.6" fill="#303030"/><circle cx="12" cy="12" r="1.6" fill="#303030"/></svg><svg style="position:absolute;left:123px;top:537px" width="16" height="14" viewBox="0 0 16 14"><rect x="4" y="0.5" width="11" height="10" rx="1" fill="#e8e8e8" stroke="#808080"/><g stroke="#a0a0a0" stroke-width="0.8"><line x1="7" y1="2" x2="7" y2="9"/><line x1="10" y1="2" x2="10" y2="9"/><line x1="13" y1="2" x2="13" y2="9"/></g><rect x="0.5" y="3" width="4" height="8" fill="#f0c020" stroke="#806010" stroke-width="0.8"/><circle cx="3" cy="12" r="1.6" fill="#303030"/><circle cx="12" cy="12" r="1.6" fill="#303030"/></svg><svg style="position:absolute;left:229px;top:537px" width="16" height="14" viewBox="0 0 16 14"><rect x="4" y="0.5" width="11" height="10" rx="1" fill="#e8e8e8" stroke="#808080"/><g stroke="#a0a0a0" stroke-width="0.8"><line x1="7" y1="2" x2="7" y2="9"/><line x1="10" y1="2" x2="10" y2="9"/><line x1="13" y1="2" x2="13" y2="9"/></g><rect x="0.5" y="3" width="4" height="8" fill="#f0c020" stroke="#806010" stroke-width="0.8"/><circle cx="3" cy="12" r="1.6" fill="#303030"/><circle cx="12" cy="12" r="1.6" fill="#303030"/></svg><svg style="position:absolute;left:335px;top:537px" width="16" height="14" viewBox="0 0 16 14"><rect x="4" y="0.5" width="11" height="10" rx="1" fill="#e8e8e8" stroke="#808080"/><g stroke="#a0a0a0" stroke-width="0.8"><line x1="7" y1="2" x2="7" y2="9"/><line x1="10" y1="2" x2="10" y2="9"/><line x1="13" y1="2" x2="13" y2="9"/></g><rect x="0.5" y="3" width="4" height="8" fill="#f0c020" stroke="#806010" stroke-width="0.8"/><circle cx="3" cy="12" r="1.6" fill="#303030"/><circle cx="12" cy="12" r="1.6" fill="#303030"/></svg><svg style="position:absolute;left:441px;top:537px" width="16" height="14" viewBox="0 0 16 14"><rect x="4" y="0.5" width="11" height="10" rx="1" fill="#e8e8e8" stroke="#808080"/><g stroke="#a0a0a0" stroke-width="0.8"><line x1="7" y1="2" x2="7" y2="9"/><line x1="10" y1="2" x2="10" y2="9"/><line x1="13" y1="2" x2="13" y2="9"/></g><rect x="0.5" y="3" width="4" height="8" fill="#f0c020" stroke="#806010" stroke-width="0.8"/><circle cx="3" cy="12" r="1.6" fill="#303030"/><circle cx="12" cy="12" r="1.6" fill="#303030"/></svg><svg style="position:absolute;left:547px;top:537px" width="16" height="15" viewBox="0 0 16 15"><path d="M1 1 L5 4 L11 4 L15 1 L15 9 Q8 16 1 9z" fill="#e8a040" stroke="#a06020" stroke-width="0.8"/><path d="M4 9 Q8 14 12 9 Q8 11 4 9z" fill="#fff0d8"/><circle cx="5.5" cy="7" r="1" fill="#201008"/><circle cx="10.5" cy="7" r="1" fill="#201008"/></svg><svg style="position:absolute;left:654px;top:539px" width="19" height="12" viewBox="0 0 19 12"><text x="0" y="10" font-family="Liberation Serif" font-size="10" fill="#303030">[</text><text x="3.5" y="9" font-family="Liberation Serif" font-style="italic" font-size="10" fill="#303030">x</text><text x="9" y="9.5" font-family="Liberation Sans" font-size="9" fill="#303030">=]</text></svg><svg style="position:absolute;left:750px;top:536px" width="14" height="17" viewBox="0 0 14 17"><path d="M3 16 L9 5 Q11 1 8 1 Q5 1 5 4" stroke="#e04040" stroke-width="2.4" fill="none"/><path d="M4 13 l2 1 M6 9 l2 1 M8 5 l2 0.5" stroke="#fff" stroke-width="1"/></svg><div style="position:absolute;left:2px;top:558px;width:968px;height:208px;background:#FFF8F0;border:1px solid #a0a0a0;box-sizing:border-box;"></div><div style="position:absolute;left:3px;top:559px;width:945px;height:18px;background:linear-gradient(#d0d0d0,#c0c0c0);border-bottom:1px solid #a0a0a0;box-sizing:border-box;"></div><div style="position:absolute;left:81px;top:560px;width:2px;height:16px;background:#a8a8a8;border-right:1px solid #e8e8e8;box-sizing:border-box;"></div><div style="position:absolute;left:514px;top:560px;width:2px;height:16px;background:#a8a8a8;border-right:1px solid #e8e8e8;box-sizing:border-box;"></div><div style="position:absolute;left:665px;top:560px;width:2px;height:16px;background:#a8a8a8;border-right:1px solid #e8e8e8;box-sizing:border-box;"></div><div class="m" style="left:7px;top:562px;color:#000;">Address</div><div class="m" style="left:87px;top:562px;color:#000;">Hex</div><div class="m" style="left:518px;top:562px;color:#000;">ASCII</div><div style="position:absolute;left:3px;top:578px;width:944px;height:187px;overflow:hidden;"><div style="position:absolute;left:83px;top:0px;width:24px;height:15px;background:#C0C0C0;"></div><div style="position:absolute;left:514px;top:0px;width:11px;height:15px;background:#C0C0C0;"></div><div class="m" style="left:4px;top:0px;color:#000;">773F1000</div><div class="m" style="left:84px;top:0px;color:#000;"><span style="color:#800080">53</span> <span style="color:#008000">00</span> <span style="color:#800080">59</span> <span style="color:#008000">00</span> <span style="color:#800080">53</span> <span style="color:#008000">00</span> <span style="color:#800080">54</span> <span style="color:#008000">00</span> <span style="color:#800080">45</span> <span style="color:#008000">00</span> <span style="color:#800080">4D</span> <span style="color:#008000">00</span> <span style="color:#008000">00</span> <span style="color:#008000">00</span> <span style="color:#000">90</span> <span style="color:#000">90</span> </div><div class="m" style="left:515px;top:0px;color:#000;"><span style="color:#800080">S</span><span style="color:#008000">.</span><span style="color:#800080">Y</span><span style="color:#008000">.</span><span style="color:#800080">S</span><span style="color:#008000">.</span><span style="color:#800080">T</span><span style="color:#008000">.</span><span style="color:#800080">E</span><span style="color:#008000">.</span><span style="color:#800080">M</span><span style="color:#008000">.</span><span style="color:#008000">.</span><span style="color:#008000">.</span><span style="color:#000">.</span><span style="color:#000">.</span></div><div style="position:absolute;left:84px;top:14px;width:98px;height:2px;background:#1ed41e;"></div><div style="position:absolute;left:192px;top:14px;width:98px;height:2px;background:#1ed41e;"></div><div style="position:absolute;left:300px;top:14px;width:98px;height:2px;background:#1ed41e;"></div><div class="m" style="left:4px;top:15px;color:#000;">773F1010</div><div class="m" style="left:84px;top:15px;color:#000;"><span style="color:#800080">72</span> <span style="color:#008000">00</span> <span style="color:#800080">63</span> <span style="color:#008000">00</span> <span style="color:#008000">00</span> <span style="color:#008000">00</span> <span style="color:#000">8B</span> <span style="color:#800080">46</span> <span style="color:#800080">0C</span> <span style="color:#800080">3B</span> <span style="color:#000">C7</span> <span style="color:#000">0F</span> <span style="color:#000">85</span> <span style="color:#800080">56</span> <span style="color:#000">BD</span> <span style="color:#800080">09</span> </div><div class="m" style="left:515px;top:15px;color:#000;"><span style="color:#800080">r</span><span style="color:#008000">.</span><span style="color:#800080">c</span><span style="color:#008000">.</span><span style="color:#008000">.</span><span style="color:#008000">.</span><span style="color:#000">.</span><span style="color:#800080">F</span><span style="color:#800080">.</span><span style="color:#800080">;</span><span style="color:#000">Ç</span><span style="color:#000">.</span><span style="color:#000">.</span><span style="color:#800080">V</span><span style="color:#000">½</span><span style="color:#800080">.</span></div><div style="position:absolute;left:84px;top:29px;width:98px;height:2px;background:#1ed41e;"></div><div style="position:absolute;left:408px;top:29px;width:98px;height:2px;background:#000080;"></div><div class="m" style="left:4px;top:30px;color:#000;">773F1020</div><div class="m" style="left:84px;top:30px;color:#000;"><span style="color:#008000">00</span> <span style="color:#800080">64</span> <span style="color:#000">A1</span> <span style="color:#000">18</span> <span style="color:#008000">00</span> <span style="color:#008000">00</span> <span style="color:#008000">00</span> <span style="color:#000">8B</span> <span style="color:#800080">40</span> <span style="color:#800080">30</span> <span style="color:#800080">56</span> <span style="color:#800080">57</span> <span style="color:#800000">FF</span> <span style="color:#800080">70</span> <span style="color:#000">18</span> <span style="color:#000">E8</span> </div><div class="m" style="left:515px;top:30px;color:#000;"><span style="color:#008000">.</span><span style="color:#800080">d</span><span style="color:#000">¡</span><span style="color:#000">.</span><span style="color:#008000">.</span><span style="color:#008000">.</span><span style="color:#008000">.</span><span style="color:#000">.</span><span style="color:#800080">@</span><span style="color:#800080">0</span><span style="color:#800080">V</span><span style="color:#800080">W</span><span style="color:#800000">ÿ</span><span style="color:#800080">p</span><span style="color:#000">.</span><span style="color:#000">è</span></div><div class="m" style="left:4px;top:45px;color:#000;">773F1030</div><div class="m" style="left:84px;top:45px;color:#000;"><span style="color:#000">C6</span> <span style="color:#000">17</span> <span style="color:#000">05</span> <span style="color:#008000">00</span> <span style="color:#800080">33</span> <span style="color:#000">C0</span> <span style="color:#000">E9</span> <span style="color:#000">BF</span> <span style="color:#000">9A</span> <span style="color:#000">06</span> <span style="color:#008000">00</span> <span style="color:#800080">33</span> <span style="color:#000">C0</span> <span style="color:#000">E9</span> <span style="color:#000">9E</span> <span style="color:#000">9A</span> </div><div class="m" style="left:515px;top:45px;color:#000;"><span style="color:#000">Æ</span><span style="color:#000">.</span><span style="color:#000">.</span><span style="color:#008000">.</span><span style="color:#800080">3</span><span style="color:#000">À</span><span style="color:#000">é</span><span style="color:#000">¿</span><span style="color:#000">.</span><span style="color:#000">.</span><span style="color:#008000">.</span><span style="color:#800080">3</span><span style="color:#000">À</span><span style="color:#000">é</span><span style="color:#000">.</span><span style="color:#000">.</span></div><div class="m" style="left:4px;top:60px;color:#000;">773F1040</div><div class="m" style="left:84px;top:60px;color:#000;"><span style="color:#000">06</span> <span style="color:#008000">00</span> <span style="color:#000">90</span> <span style="color:#000">90</span> <span style="color:#000">90</span> <span style="color:#000">90</span> <span style="color:#000">90</span> <span style="color:#000">8B</span> <span style="color:#800000">FF</span> <span style="color:#800080">55</span> <span style="color:#000">8B</span> <span style="color:#000">EC</span> <span style="color:#000">83</span> <span style="color:#800080">7D</span> <span style="color:#000">08</span> <span style="color:#008000">00</span> </div><div class="m" style="left:515px;top:60px;color:#000;"><span style="color:#000">.</span><span style="color:#008000">.</span><span style="color:#000">.</span><span style="color:#000">.</span><span style="color:#000">.</span><span style="color:#000">.</span><span style="color:#000">.</span><span style="color:#000">.</span><span style="color:#800000">ÿ</span><span style="color:#800080">U</span><span style="color:#000">.</span><span style="color:#000">ì</span><span style="color:#000">.</span><span style="color:#800080">}</span><span style="color:#000">.</span><span style="color:#008000">.</span></div><div class="m" style="left:4px;top:75px;color:#000;">773F1050</div><div class="m" style="left:84px;top:75px;color:#000;"><span style="color:#000">0F</span> <span style="color:#000">84</span> <span style="color:#000">10</span> <span style="color:#000">BF</span> <span style="color:#800080">09</span> <span style="color:#008000">00</span> <span style="color:#800080">57</span> <span style="color:#000">8B</span> <span style="color:#800080">7D</span> <span style="color:#800080">0C</span> <span style="color:#000">85</span> <span style="color:#800000">FF</span> <span style="color:#800080">75</span> <span style="color:#000">03</span> <span style="color:#800080">6A</span> <span style="color:#800080">0A</span> </div><div class="m" style="left:515px;top:75px;color:#000;"><span style="color:#000">.</span><span style="color:#000">.</span><span style="color:#000">.</span><span style="color:#000">¿</span><span style="color:#800080">.</span><span style="color:#008000">.</span><span style="color:#800080">W</span><span style="color:#000">.</span><span style="color:#800080">}</span><span style="color:#800080">.</span><span style="color:#000">.</span><span style="color:#800000">ÿ</span><span style="color:#800080">u</span><span style="color:#000">.</span><span style="color:#800080">j</span><span style="color:#800080">.</span></div><div style="position:absolute;left:408px;top:89px;width:98px;height:2px;background:#000080;"></div><div class="m" style="left:4px;top:90px;color:#000;">773F1060</div><div class="m" style="left:84px;top:90px;color:#000;"><span style="color:#800080">5F</span> <span style="color:#800080">64</span> <span style="color:#000">A1</span> <span style="color:#000">18</span> <span style="color:#008000">00</span> <span style="color:#008000">00</span> <span style="color:#008000">00</span> <span style="color:#000">8B</span> <span style="color:#800080">40</span> <span style="color:#800080">30</span> <span style="color:#800080">56</span> <span style="color:#800080">6A</span> <span style="color:#800080">0C</span> <span style="color:#800080">6A</span> <span style="color:#000">08</span> <span style="color:#800000">FF</span> </div><div class="m" style="left:515px;top:90px;color:#000;"><span style="color:#800080">_</span><span style="color:#800080">d</span><span style="color:#000">¡</span><span style="color:#000">.</span><span style="color:#008000">.</span><span style="color:#008000">.</span><span style="color:#008000">.</span><span style="color:#000">.</span><span style="color:#800080">@</span><span style="color:#800080">0</span><span style="color:#800080">V</span><span style="color:#800080">j</span><span style="color:#800080">.</span><span style="color:#800080">j</span><span style="color:#000">.</span><span style="color:#800000">ÿ</span></div><div class="m" style="left:4px;top:105px;color:#000;">773F1070</div><div class="m" style="left:84px;top:105px;color:#000;"><span style="color:#800080">70</span> <span style="color:#000">18</span> <span style="color:#000">E8</span> <span style="color:#000">EF</span> <span style="color:#000">18</span> <span style="color:#000">05</span> <span style="color:#008000">00</span> <span style="color:#000">8B</span> <span style="color:#000">F0</span> <span style="color:#000">85</span> <span style="color:#000">F6</span> <span style="color:#800080">74</span> <span style="color:#800080">38</span> <span style="color:#800080">64</span> <span style="color:#000">A1</span> <span style="color:#000">18</span> </div><div class="m" style="left:515px;top:105px;color:#000;"><span style="color:#800080">p</span><span style="color:#000">.</span><span style="color:#000">è</span><span style="color:#000">ï</span><span style="color:#000">.</span><span style="color:#000">.</span><span style="color:#008000">.</span><span style="color:#000">.</span><span style="color:#000">ð</span><span style="color:#000">.</span><span style="color:#000">ö</span><span style="color:#800080">t</span><span style="color:#800080">8</span><span style="color:#800080">d</span><span style="color:#000">¡</span><span style="color:#000">.</span></div><div class="m" style="left:4px;top:120px;color:#000;">773F1080</div><div class="m" style="left:84px;top:120px;color:#000;"><span style="color:#008000">00</span> <span style="color:#008000">00</span> <span style="color:#008000">00</span> <span style="color:#000">8B</span> <span style="color:#800080">40</span> <span style="color:#800080">30</span> <span style="color:#000">8B</span> <span style="color:#000">CF</span> <span style="color:#000">C1</span> <span style="color:#000">E1</span> <span style="color:#000">02</span> <span style="color:#800080">51</span> <span style="color:#800080">6A</span> <span style="color:#008000">00</span> <span style="color:#800000">FF</span> <span style="color:#800080">70</span> </div><div class="m" style="left:515px;top:120px;color:#000;"><span style="color:#008000">.</span><span style="color:#008000">.</span><span style="color:#008000">.</span><span style="color:#000">.</span><span style="color:#800080">@</span><span style="color:#800080">0</span><span style="color:#000">.</span><span style="color:#000">Ï</span><span style="color:#000">Á</span><span style="color:#000">á</span><span style="color:#000">.</span><span style="color:#800080">Q</span><span style="color:#800080">j</span><span style="color:#008000">.</span><span style="color:#800000">ÿ</span><span style="color:#800080">p</span></div><div class="m" style="left:4px;top:135px;color:#000;">773F1090</div><div class="m" style="left:84px;top:135px;color:#000;"><span style="color:#000">18</span> <span style="color:#000">E8</span> <span style="color:#000">D0</span> <span style="color:#000">18</span> <span style="color:#000">05</span> <span style="color:#008000">00</span> <span style="color:#000">89</span> <span style="color:#800080">46</span> <span style="color:#000">08</span> <span style="color:#000">85</span> <span style="color:#000">C0</span> <span style="color:#000">0F</span> <span style="color:#000">84</span> <span style="color:#000">CC</span> <span style="color:#000">BE</span> <span style="color:#800080">09</span> </div><div class="m" style="left:515px;top:135px;color:#000;"><span style="color:#000">.</span><span style="color:#000">è</span><span style="color:#000">Ð</span><span style="color:#000">.</span><span style="color:#000">.</span><span style="color:#008000">.</span><span style="color:#000">.</span><span style="color:#800080">F</span><span style="color:#000">.</span><span style="color:#000">.</span><span style="color:#000">À</span><span style="color:#000">.</span><span style="color:#000">.</span><span style="color:#000">Ì</span><span style="color:#000">¾</span><span style="color:#800080">.</span></div><div style="position:absolute;left:408px;top:149px;width:98px;height:2px;background:#000080;"></div><div class="m" style="left:4px;top:150px;color:#000;">773F10A0</div><div class="m" style="left:84px;top:150px;color:#000;"><span style="color:#008000">00</span> <span style="color:#000">8B</span> <span style="color:#800080">45</span> <span style="color:#000">08</span> <span style="color:#000">83</span> <span style="color:#800080">26</span> <span style="color:#008000">00</span> <span style="color:#000">89</span> <span style="color:#800080">7E</span> <span style="color:#000">04</span> <span style="color:#000">89</span> <span style="color:#800080">30</span> <span style="color:#800080">33</span> <span style="color:#000">C0</span> <span style="color:#800080">40</span> <span style="color:#800080">5E</span> </div><div class="m" style="left:515px;top:150px;color:#000;"><span style="color:#008000">.</span><span style="color:#000">.</span><span style="color:#800080">E</span><span style="color:#000">.</span><span style="color:#000">.</span><span style="color:#800080">&amp;</span><span style="color:#008000">.</span><span style="color:#000">.</span><span style="color:#800080">~</span><span style="color:#000">.</span><span style="color:#000">.</span><span style="color:#800080">0</span><span style="color:#800080">3</span><span style="color:#000">À</span><span style="color:#800080">@</span><span style="color:#800080">^</span></div><div style="position:absolute;left:84px;top:164px;width:98px;height:2px;background:#000080;"></div><div class="m" style="left:4px;top:165px;color:#000;">773F10B0</div><div class="m" style="left:84px;top:165px;color:#000;"><span style="color:#800080">5F</span> <span style="color:#800080">5D</span> <span style="color:#000">C2</span> <span style="color:#000">08</span> <span style="color:#008000">00</span> <span style="color:#800080">33</span> <span style="color:#000">C0</span> <span style="color:#000">EB</span> <span style="color:#000">F6</span> <span style="color:#000">83</span> <span style="color:#000">CF</span> <span style="color:#000">02</span> <span style="color:#000">E9</span> <span style="color:#800080">3E</span> <span style="color:#000">9C</span> <span style="color:#000">06</span> </div><div class="m" style="left:515px;top:165px;color:#000;"><span style="color:#800080">_</span><span style="color:#800080">]</span><span style="color:#000">Â</span><span style="color:#000">.</span><span style="color:#008000">.</span><span style="color:#800080">3</span><span style="color:#000">À</span><span style="color:#000">ë</span><span style="color:#000">ö</span><span style="color:#000">.</span><span style="color:#000">Ï</span><span style="color:#000">.</span><span style="color:#000">é</span><span style="color:#800080">&gt;</span><span style="color:#000">.</span><span style="color:#000">.</span></div><div style="position:absolute;left:84px;top:179px;width:98px;height:2px;background:#000080;"></div><div style="position:absolute;left:300px;top:179px;width:98px;height:2px;background:#000080;"></div><div style="position:absolute;left:408px;top:179px;width:98px;height:2px;background:#000080;"></div><div class="m" style="left:4px;top:180px;color:#000;">773F10C0</div><div class="m" style="left:84px;top:180px;color:#000;"><span style="color:#008000">00</span> <span style="color:#000">83</span> <span style="color:#000">CF</span> <span style="color:#000">08</span> <span style="color:#000">E9</span> <span style="color:#800080">48</span> <span style="color:#000">9C</span> <span style="color:#000">06</span> <span style="color:#008000">00</span> <span style="color:#800080">33</span> <span style="color:#000">C0</span> <span style="color:#000">E9</span> <span style="color:#000">AC</span> <span style="color:#000">9C</span> <span style="color:#000">06</span> <span style="color:#008000">00</span> </div><div class="m" style="left:515px;top:180px;color:#000;"><span style="color:#008000">.</span><span style="color:#000">.</span><span style="color:#000">Ï</span><span style="color:#000">.</span><span style="color:#000">é</span><span style="color:#800080">H</span><span style="color:#000">.</span><span style="color:#000">.</span><span style="color:#008000">.</span><span style="color:#800080">3</span><span style="color:#000">À</span><span style="color:#000">é</span><span style="color:#000">¬</span><span style="color:#000">.</span><span style="color:#000">.</span><span style="color:#008000">.</span></div><div style="position:absolute;left:79px;top:0px;width:1px;height:188px;background:#a0a0a0;"></div><div style="position:absolute;left:188px;top:0px;width:1px;height:188px;background:#a0a0a0;"></div><div style="position:absolute;left:296px;top:0px;width:1px;height:188px;background:#a0a0a0;"></div><div style="position:absolute;left:404px;top:0px;width:1px;height:188px;background:#a0a0a0;"></div><div style="position:absolute;left:511px;top:0px;width:1px;height:188px;background:#a0a0a0;"></div><div style="position:absolute;left:662px;top:0px;width:1px;height:188px;background:#a0a0a0;"></div></div><div style="position:absolute;left:947px;top:559px;width:22px;height:206px;background:#f0f0f0;border-left:1px solid #a0a0a0;box-sizing:border-box;"></div><svg style="position:absolute;left:952px;top:563px" width="12" height="10"><path d="M2 7 L6 3 L10 7 Z" fill="#606060"/></svg><div style="position:absolute;left:950px;top:581px;width:17px;height:20px;background:linear-gradient(90deg,#f4f4f4,#d8d8d8);border:1px solid #b8b8b8;border-radius:2px;box-sizing:border-box;"></div><svg style="position:absolute;left:952px;top:750px" width="12" height="10"><path d="M2 3 L6 7 L10 3 Z" fill="#606060"/></svg><div style="position:absolute;left:970px;top:529px;width:626px;height:237px;background:#FFF8F0;border:1px solid #a0a0a0;box-sizing:border-box;"></div><div style="position:absolute;left:971px;top:531px;width:609px;height:213px;overflow:hidden;"><div style="position:absolute;left:1px;top:0px;width:96px;height:15px;background:#000;"></div><div style="position:absolute;left:97px;top:0px;width:512px;height:15px;background:#C0C0C0;"></div><div class="m" style="left:6px;top:0px;color:#fff;">0012DFCC</div><div class="m" style="left:102px;top:0px;color:#000;">004A1538</div><div class="m" style="left:209px;top:0px;color:#E00000;">return to empires2.004A1538 from ???</div><div class="m" style="left:6px;top:15px;color:#808080;">0012DFD0</div><div class="m" style="left:102px;top:15px;color:#000;">00000041</div><div class="m" style="left:6px;top:30px;color:#808080;">0012DFD4</div><div class="m" style="left:102px;top:30px;color:#000;">001E0001</div><div class="m" style="left:6px;top:45px;color:#808080;">0012DFD8</div><div class="m" style="left:102px;top:45px;color:#000;">00000000</div><div class="m" style="left:6px;top:60px;color:#808080;">0012DFDC</div><div class="m" style="left:102px;top:60px;color:#000;">00000000</div><div class="m" style="left:6px;top:75px;color:#808080;">0012DFE0</div><div class="m" style="left:102px;top:75px;color:#000;">00000000</div><div class="m" style="left:6px;top:90px;color:#808080;">0012DFE4</div><div class="m" style="left:102px;top:90px;color:#000;">757F294D</div><div class="m" style="left:209px;top:90px;color:#000;">user32.757F294D</div><div class="m" style="left:6px;top:105px;color:#808080;">0012DFE8</div><div class="m" style="left:102px;top:105px;color:#000;">00AD0020</div><div class="m" style="left:6px;top:120px;color:#808080;">0012DFEC</div><div class="m" style="left:102px;top:120px;color:#000;">001E0001</div><div class="m" style="left:6px;top:135px;color:#808080;">0012DFF0</div><div class="m" style="left:102px;top:135px;color:#000;">00000000</div><div class="m" style="left:6px;top:150px;color:#808080;">0012DFF4</div><div class="m" style="left:102px;top:150px;color:#000;">004A10C4</div><div class="m" style="left:209px;top:150px;color:#E00000;">return to empires2.004A10C4 from ???</div><div class="m" style="left:6px;top:165px;color:#808080;">0012DFF8</div><div class="m" style="left:102px;top:165px;color:#000;">00000041</div><div class="m" style="left:6px;top:180px;color:#808080;">0012DFFC</div><div class="m" style="left:102px;top:180px;color:#000;">001E0001</div><div class="m" style="left:6px;top:195px;color:#808080;">0012E000</div><div class="m" style="left:102px;top:195px;color:#000;">00000000</div><div class="m" style="left:6px;top:210px;color:#808080;">0012E004</div><div class="m" style="left:102px;top:210px;color:#000;">00000000</div><div class="m" style="left:85px;top:90px;color:#808080;">&lt;</div><div style="position:absolute;left:96px;top:0px;width:1px;height:214px;background:#808080;"></div><div style="position:absolute;left:203px;top:0px;width:1px;height:214px;background:#808080;"></div></div><div style="position:absolute;left:1580px;top:530px;width:16px;height:214px;background:#f0f0f0;"></div><svg style="position:absolute;left:1583px;top:535px" width="12" height="10"><path d="M2 7 L6 3 L10 7 Z" fill="#606060"/></svg><div style="position:absolute;left:1581px;top:669px;width:15px;height:20px;background:linear-gradient(90deg,#f4f4f4,#d8d8d8);border:1px solid #b8b8b8;border-radius:2px;box-sizing:border-box;"></div><svg style="position:absolute;left:1583px;top:728px" width="12" height="10"><path d="M2 3 L6 7 L10 3 Z" fill="#606060"/></svg><div style="position:absolute;left:971px;top:744px;width:625px;height:21px;background:#f0f0f0;border-top:1px solid #e6e6e6;box-sizing:border-box;"></div><svg style="position:absolute;left:975px;top:748px" width="12" height="14"><path d="M8 3 L4 7 L8 11 Z" fill="#606060"/></svg><div style="position:absolute;left:995px;top:745px;width:160px;height:19px;background:linear-gradient(#f7f7f7,#e2e2e2);border:1px solid #b8b8b8;border-radius:2px;box-sizing:border-box;"></div><div class="m" style="left:1068px;top:747px;color:#808080;font-size:11px;">|||</div><svg style="position:absolute;left:1565px;top:748px" width="12" height="14"><path d="M4 3 L8 7 L4 11 Z" fill="#606060"/></svg><div class="s" style="left:4px;top:772px;font-size:14.5px;">Command:</div><div style="position:absolute;left:81px;top:768px;width:1424px;height:23px;background:#fff;border:1px solid #e4e4e4;box-sizing:border-box;"></div><div style="position:absolute;left:1507px;top:768px;width:92px;height:24px;background:linear-gradient(#fafafa,#e9e9e9 50%,#dcdcdc);border:1px solid #a8a8a8;border-radius:3px;box-sizing:border-box;"></div><div class="s" style="left:1512px;top:772px;font-size:14.5px;">Default</div><svg style="position:absolute;left:1585px;top:776px" width="10" height="8"><path d="M1 2 L9 2 L5 7 Z" fill="#000"/></svg><div style="position:absolute;left:0px;top:794px;width:1596px;height:25px;background:#c0c0c0;"></div><div style="position:absolute;left:4px;top:797px;width:86px;height:22px;background:#ffff00;border:1px solid #c0c000;box-sizing:border-box;"></div><div class="s" style="left:23px;top:800px;font-size:14px;color:#ff2000;">Paused</div><div style="position:absolute;left:94px;top:797px;width:1252px;height:22px;background:#c0c0c0;border:1px solid #7c7c7c;border-right-color:#e8e8e8;border-bottom:none;box-sizing:border-box;"></div><div class="s" style="left:100px;top:800px;font-size:15px;">INT3 breakpoint at empires2.004B0820 (004B0820)!</div><div style="position:absolute;left:1350px;top:797px;width:246px;height:22px;background:#c0c0c0;border:1px solid #7c7c7c;border-bottom:none;border-right:none;box-sizing:border-box;"></div><div class="s" style="left:1357px;top:800px;font-size:15px;">Time Wasted Debugging: 0:20:26:16</div><div style="position:absolute;white-space:pre;font-family:'Liberation Sans',sans-serif;font-weight:bold;font-size:24px;line-height:24px;letter-spacing:-0.7px;color:#000;left:1091px;top:391px;">arg2?</div><div style="position:absolute;white-space:pre;font-family:'Liberation Sans',sans-serif;font-weight:bold;font-size:24px;line-height:24px;letter-spacing:-0.7px;color:#000;left:1296px;top:555px;">arg3?</div><div style="position:absolute;white-space:pre;font-family:'Liberation Sans',sans-serif;font-weight:bold;font-size:24px;line-height:24px;letter-spacing:-0.7px;color:#000;left:1273px;top:590px;">arg5?</div><div style="position:absolute;white-space:pre;font-family:'Liberation Sans',sans-serif;font-weight:bold;font-size:24px;line-height:24px;letter-spacing:-0.7px;color:#000;left:775px;top:614px;">arg4 ?</div><svg style="position:absolute;left:0;top:0" width="1596" height="819"><line x1="1169" y1="453" x2="1160" y2="535" stroke="#000" stroke-width="4" stroke-linecap="round"/><line x1="1173" y1="551" x2="1272" y2="558" stroke="#000" stroke-width="4" stroke-linecap="round"/><line x1="1173" y1="582" x2="1258" y2="588" stroke="#000" stroke-width="4" stroke-linecap="round"/><line x1="866" y1="604" x2="972" y2="567" stroke="#000" stroke-width="4" stroke-linecap="round"/></svg></body></html>
